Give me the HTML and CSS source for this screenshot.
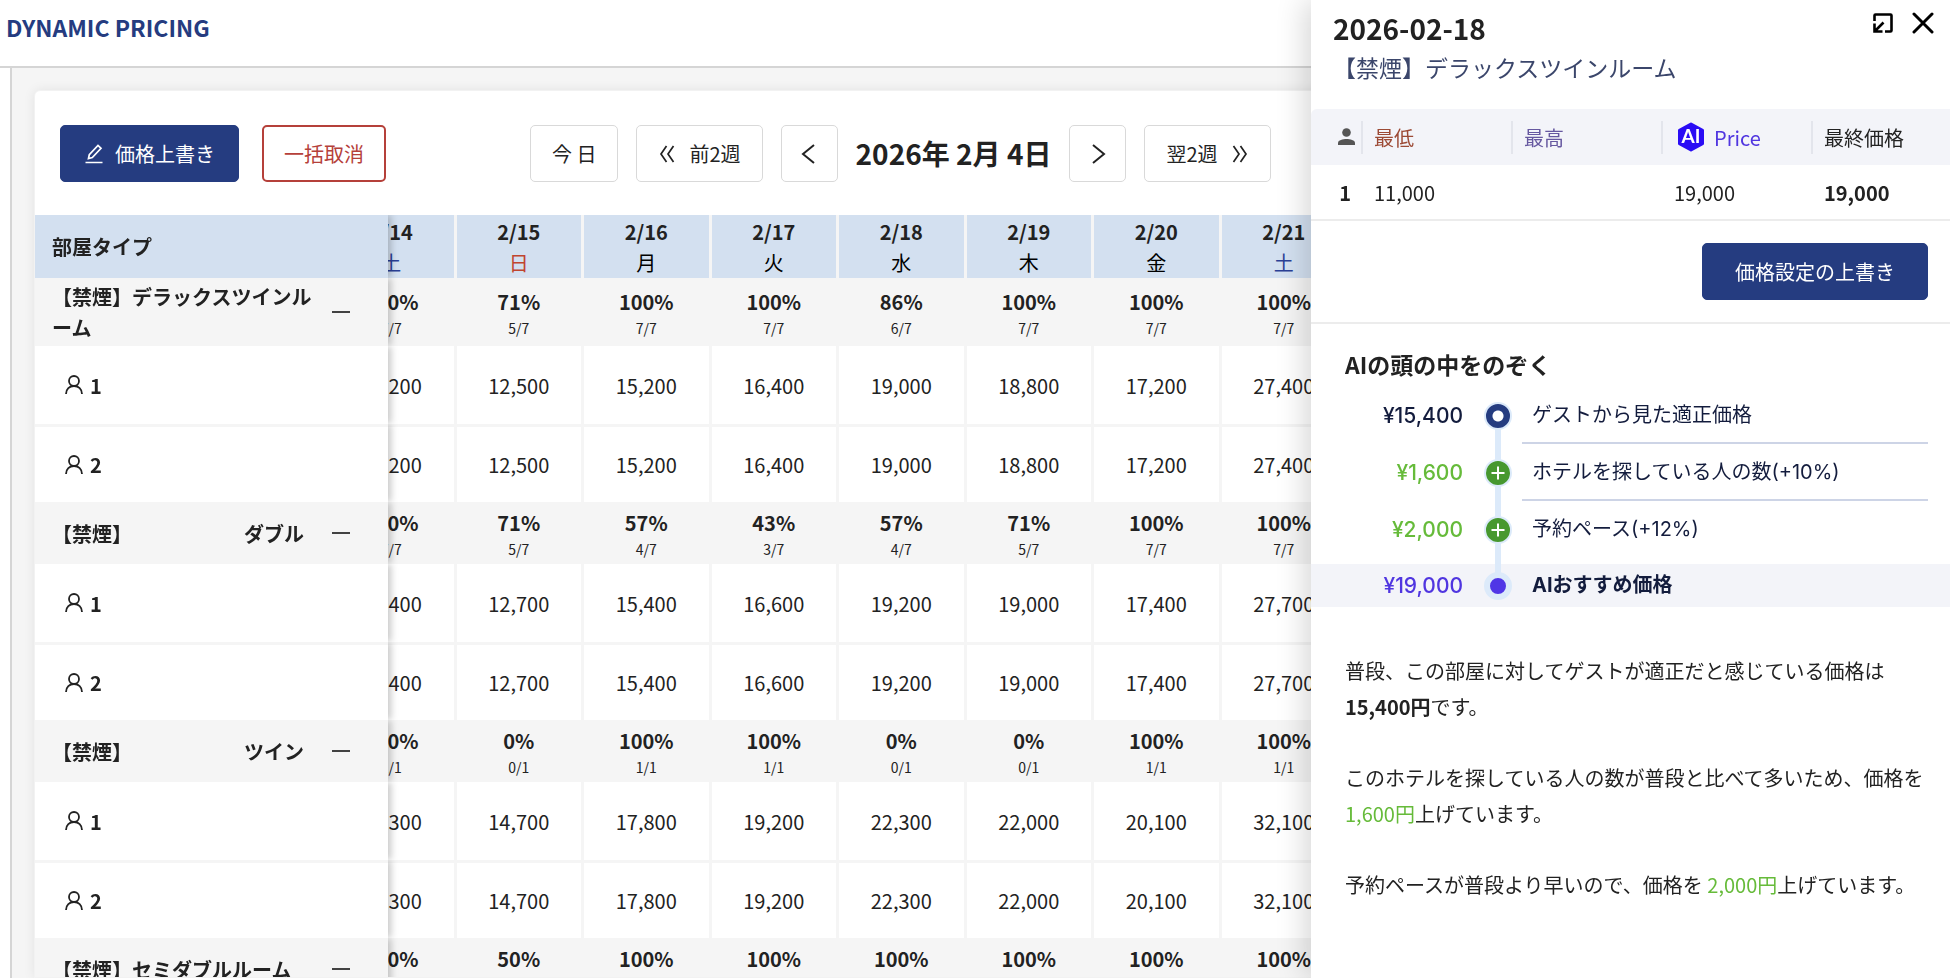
FILE: index.html
```
<!DOCTYPE html>
<html lang="ja">
<head>
    <meta charset="UTF-8">
    <title>DYNAMIC PRICING</title>
    <link rel="stylesheet" href="styles.css">
</head>
<body>
    <!-- Shared icons -->
    <svg class="sprite" aria-hidden="true">
        <symbol id="user" viewBox="0 0 18 20">
            <circle cx="9" cy="6" r="5"/>
            <path d="M1 19c0-5 3.500-8 8-8s8 3 8 8"/>
        </symbol>
        <symbol id="minus" viewBox="0 0 20 20">
            <path d="M1 10h18"/>
        </symbol>
        <symbol id="plus" viewBox="0 0 24 24">
            <path d="M12 5.500v13M5.500 12h13"/>
        </symbol>
    </svg>

    <header class="header">
        <h1>DYNAMIC PRICING</h1>
    </header>

    <main class="main">
        <section class="card">
            <div class="toolbar">
                <div class="actions">
                    <button class="btn btn-primary">
                        <svg class="icon" viewBox="0 0 20 20"><path d="M1.500 18.500h17M4.500 14.500l.8-3.800L14 1.500l3 2.800-8.700 9.200z"/></svg>
                        価格上書き
                    </button>
                    <button class="btn btn-danger">一括取消</button>
                </div>
                <nav class="date-nav">
                    <button class="btn">今 日</button>
                    <button class="btn">
                        <svg class="icon" viewBox="0 0 20 20"><path d="M8.500 2L3 10l5.500 8M15.500 2L10 10l5.500 8"/></svg>
                        前2週
                    </button>
                    <button class="btn btn-square" aria-label="前の日">
                        <svg class="icon icon-bold" viewBox="0 0 20 20"><path d="M15 1L4 10l11 9"/></svg>
                    </button>
                    <h2>2026年 2月 4日</h2>
                    <button class="btn btn-square" aria-label="次の日">
                        <svg class="icon icon-bold" viewBox="0 0 20 20"><path d="M5 1l11 9-11 9"/></svg>
                    </button>
                    <button class="btn">
                        翌2週
                        <svg class="icon" viewBox="0 0 20 20"><path d="M4.500 2l5.500 8-5.500 8M11.500 2l5.500 8-5.500 8"/></svg>
                    </button>
                </nav>
            </div>

            <div class="table-wrap">
                <table class="price-table">
                    <thead>
                        <tr>
                            <th class="room">部屋タイプ</th>
                            <th>2/14<span class="sat">土</span></th>
                            <th>2/15<span class="sun">日</span></th>
                            <th>2/16<span>月</span></th>
                            <th>2/17<span>火</span></th>
                            <th>2/18<span>水</span></th>
                            <th>2/19<span>木</span></th>
                            <th>2/20<span>金</span></th>
                            <th>2/21<span class="sat">土</span></th>
                        </tr>
                    </thead>
                    <tbody>
                        <tr class="group group-first">
                            <th class="room">
                                <div class="room-name"><span class="name">【禁煙】デラックスツインルーム</span><button class="toggle" aria-label="閉じる"><svg class="icon"><use href="#minus"/></svg></button></div>
                            </th>
                            <td>100%<small>7/7</small></td>
                            <td>71%<small>5/7</small></td>
                            <td>100%<small>7/7</small></td>
                            <td>100%<small>7/7</small></td>
                            <td>86%<small>6/7</small></td>
                            <td>100%<small>7/7</small></td>
                            <td>100%<small>7/7</small></td>
                            <td>100%<small>7/7</small></td>
                        </tr>
                        <tr>
                            <th class="room"><div class="guests"><svg class="user"><use href="#user"/></svg>1</div></th>
                            <td>25,200</td><td>12,500</td><td>15,200</td><td>16,400</td><td>19,000</td><td>18,800</td><td>17,200</td><td>27,400</td>
                        </tr>
                        <tr class="next">
                            <th class="room"><div class="guests"><svg class="user"><use href="#user"/></svg>2</div></th>
                            <td>25,200</td><td>12,500</td><td>15,200</td><td>16,400</td><td>19,000</td><td>18,800</td><td>17,200</td><td>27,400</td>
                        </tr>
                        <tr class="group">
                            <th class="room">
                                <div class="room-name"><span class="name name-split"><span>【禁煙】</span><span>ダブル</span></span><button class="toggle" aria-label="閉じる"><svg class="icon"><use href="#minus"/></svg></button></div>
                            </th>
                            <td>100%<small>7/7</small></td>
                            <td>71%<small>5/7</small></td>
                            <td>57%<small>4/7</small></td>
                            <td>43%<small>3/7</small></td>
                            <td>57%<small>4/7</small></td>
                            <td>71%<small>5/7</small></td>
                            <td>100%<small>7/7</small></td>
                            <td>100%<small>7/7</small></td>
                        </tr>
                        <tr>
                            <th class="room"><div class="guests"><svg class="user"><use href="#user"/></svg>1</div></th>
                            <td>25,400</td><td>12,700</td><td>15,400</td><td>16,600</td><td>19,200</td><td>19,000</td><td>17,400</td><td>27,700</td>
                        </tr>
                        <tr class="next">
                            <th class="room"><div class="guests"><svg class="user"><use href="#user"/></svg>2</div></th>
                            <td>25,400</td><td>12,700</td><td>15,400</td><td>16,600</td><td>19,200</td><td>19,000</td><td>17,400</td><td>27,700</td>
                        </tr>
                        <tr class="group">
                            <th class="room">
                                <div class="room-name"><span class="name name-split"><span>【禁煙】</span><span>ツイン</span></span><button class="toggle" aria-label="閉じる"><svg class="icon"><use href="#minus"/></svg></button></div>
                            </th>
                            <td>100%<small>1/1</small></td>
                            <td>0%<small>0/1</small></td>
                            <td>100%<small>1/1</small></td>
                            <td>100%<small>1/1</small></td>
                            <td>0%<small>0/1</small></td>
                            <td>0%<small>0/1</small></td>
                            <td>100%<small>1/1</small></td>
                            <td>100%<small>1/1</small></td>
                        </tr>
                        <tr>
                            <th class="room"><div class="guests"><svg class="user"><use href="#user"/></svg>1</div></th>
                            <td>29,300</td><td>14,700</td><td>17,800</td><td>19,200</td><td>22,300</td><td>22,000</td><td>20,100</td><td>32,100</td>
                        </tr>
                        <tr class="next">
                            <th class="room"><div class="guests"><svg class="user"><use href="#user"/></svg>2</div></th>
                            <td>29,300</td><td>14,700</td><td>17,800</td><td>19,200</td><td>22,300</td><td>22,000</td><td>20,100</td><td>32,100</td>
                        </tr>
                        <tr class="group">
                            <th class="room">
                                <div class="room-name"><span class="name">【禁煙】セミダブルルーム</span><button class="toggle" aria-label="閉じる"><svg class="icon"><use href="#minus"/></svg></button></div>
                            </th>
                            <td>100%<small>2/2</small></td>
                            <td>50%<small>1/2</small></td>
                            <td>100%<small>2/2</small></td>
                            <td>100%<small>2/2</small></td>
                            <td>100%<small>2/2</small></td>
                            <td>100%<small>2/2</small></td>
                            <td>100%<small>2/2</small></td>
                            <td>100%<small>2/2</small></td>
                        </tr>
                    </tbody>
                </table>
            </div>
        </section>
    </main>

    <!-- Detail drawer -->
    <aside class="drawer">
        <div class="drawer-header">
            <div>
                <h2>2026-02-18</h2>
                <p>【禁煙】デラックスツインルーム</p>
            </div>
            <div class="drawer-tools">
                <button aria-label="縮小">
                    <svg viewBox="0 0 22 22" width="22" height="22"><path d="M2.500 9V3.500Q2.500 2.500 3.500 2.500h15Q19.500 2.500 19.500 3.500v15q0 1-1 1H13M2.500 11.500v8h8M3 19l8.500-8.500" stroke-width="2.600"/></svg>
                </button>
                <button aria-label="閉じる">
                    <svg viewBox="0 0 22 22" width="22" height="22"><path d="M2 2l18 18M20 2L2 20" stroke-width="3" stroke-linecap="round"/></svg>
                </button>
            </div>
        </div>

        <table class="summary">
            <thead>
                <tr>
                    <th class="col-person" aria-label="人数"><svg viewBox="0 0 17 18" width="17" height="18"><circle cx="8.500" cy="4.500" r="4.300"/><path d="M0 17v-2c0-3 5-4 8.500-4s8.500 1 8.500 4v2z"/></svg></th>
                    <th class="min">最低</th>
                    <th class="max">最高</th>
                    <th class="ai">
                        <div class="ai-label">
                            <svg viewBox="0 0 28 30" width="28" height="30"><path d="M14 2l11.500 6.300v13.400L14 28 2.500 21.700V8.300z" stroke-width="3" stroke-linejoin="round"/><text x="14" y="21" text-anchor="middle">AI</text></svg>
                            Price
                        </div>
                    </th>
                    <th>最終価格</th>
                </tr>
            </thead>
            <tbody>
                <tr>
                    <td class="col-person"><b>1</b></td>
                    <td>11,000</td>
                    <td></td>
                    <td>19,000</td>
                    <td><b>19,000</b></td>
                </tr>
            </tbody>
        </table>

        <div class="override">
            <button class="btn btn-primary btn-wide">価格設定の上書き</button>
        </div>

        <section class="reasons">
            <h3>AIの頭の中をのぞく</h3>
            <ol class="steps">
                <li>
                    <span class="amount">¥15,400</span>
                    <span class="dot dot-start"></span>
                    <span class="label">ゲストから見た適正価格</span>
                </li>
                <li>
                    <span class="amount up">¥1,600</span>
                    <span class="dot dot-plus"><svg><use href="#plus"/></svg></span>
                    <span class="label">ホテルを探している人の数(+10%)</span>
                </li>
                <li>
                    <span class="amount up">¥2,000</span>
                    <span class="dot dot-plus"><svg><use href="#plus"/></svg></span>
                    <span class="label">予約ペース(+12%)</span>
                </li>
                <li class="result">
                    <span class="amount">¥19,000</span>
                    <span class="dot dot-end"></span>
                    <span class="label">AIおすすめ価格</span>
                </li>
            </ol>
            <div class="notes">
                <p>普段、この部屋に対してゲストが適正だと感じている価格は<b>15,400円</b>です。</p>
                <p>このホテルを探している人の数が普段と比べて多いため、価格を<span class="up">1,600円</span>上げています。</p>
                <p>予約ペースが普段より早いので、価格を <span class="up">2,000円</span>上げています。</p>
            </div>
        </section>
    </aside>
</body>
</html>
```
FILE: styles.css
```
* {
    box-sizing: border-box;
}

body {
    margin: 0;
    height: 100vh;
    overflow: hidden;
    display: flex;
    flex-direction: column;
    background-color: #fff;
    color: #222;
    font-family: "Noto Sans CJK JP", sans-serif;
    font-size: 20px;
    line-height: 31px;
}

h1, h2, h3, p, ol {
    margin: 0;
    padding: 0;
}

button {
    font: inherit;
    color: inherit;
    background: none;
    border: none;
    padding: 0;
    cursor: pointer;
}

svg {
    fill: none;
    stroke: currentColor;
    flex: none;
}

.sprite {
    position: absolute;
    width: 0;
    height: 0;
}

.header {
    flex: none;
    height: 68px;
    padding: 12px 6px;
    border-bottom: 2px solid #d5d5d5;
}

.header h1 {
    color: #253c80;
    font-size: 23px;
    line-height: 31px;
}

.main {
    flex: 1;
    min-height: 0;
    margin-left: 10px;
    padding: 22px 34px 0 22px;
    border-left: 2px solid #d5d5d5;
    background-color: #f5f5f5;
}

.card {
    height: 100%;
    display: flex;
    flex-direction: column;
    background-color: #fff;
    border: 1px solid #f2f2f2;
    border-radius: 6px 6px 0 0;
    box-shadow: 0 0 12px rgba(0, 0, 0, 0.08);
}

/* Toolbar */
.toolbar {
    display: flex;
    align-items: center;
    gap: 144px;
    padding: 34px 25px 33px;
}

.actions {
    display: flex;
    gap: 23px;
}

.date-nav {
    display: flex;
    align-items: center;
    gap: 18px;
}

.date-nav h2 {
    font-size: 28px;
}

.btn {
    display: flex;
    align-items: center;
    justify-content: center;
    gap: 11px;
    height: 57px;
    padding: 0 21px;
    border: 1px solid #d9d9d9;
    border-radius: 5px;
    white-space: nowrap;
}

.btn-primary {
    padding: 0 23px;
    color: #fff;
    background-color: #253c80;
    border-color: #253c80;
}

.btn-danger {
    padding: 0 20px;
    color: #b5403a;
    border: 2px solid #b5403a;
}

.btn-square {
    width: 57px;
    padding: 0;
}

.btn-wide {
    padding: 0 32px;
}

.icon {
    width: 20px;
    height: 20px;
    stroke-width: 1.700;
}

.icon-bold {
    stroke-width: 2;
}

/* Price table */
.table-wrap {
    flex: 1;
    overflow: hidden;
}

.price-table {
    width: 1373px;
    margin-left: -59px; /* scrolled part way into 2/14 */
    table-layout: fixed;
    border-spacing: 0;
    text-align: center;
}

.price-table th,
.price-table td {
    height: 78px;
    padding: 0;
    border-right: 3px solid #f5f5f5;
    background-color: #fff;
}

.price-table .next th,
.price-table .next td {
    border-top: 3px solid #f5f5f5;
}

.price-table thead th {
    height: 63px;
    background-color: #d3e0f0;
}

.price-table thead span {
    display: block;
    font-weight: normal;
    color: #000;
}

.price-table thead .sat {
    color: #2b4096;
}

.price-table thead .sun {
    color: #c0452f;
}

.price-table .room {
    position: sticky;
    left: 0;
    z-index: 1;
    width: 353px;
    padding-right: 37px;
    padding-left: 17px;
    border-right: none;
    text-align: left;
    box-shadow: 3px 0 7px rgba(0, 0, 0, 0.22);
    clip-path: inset(0 -12px 0 0); /* shadow on the right side only */
}

.price-table .group th,
.price-table .group td {
    height: 62px;
    background-color: #f5f5f5;
    font-weight: bold;
}

.price-table .group-first th,
.price-table .group-first td {
    height: 68px;
}

.group small {
    display: block;
    font-size: 14px;
    line-height: 22px;
    font-weight: normal;
}

.room-name {
    display: flex;
    align-items: center;
    justify-content: space-between;
}

.name {
    width: 266px;
}

.name-split {
    display: flex;
    gap: 112px;
}

.toggle {
    display: flex;
}

.guests {
    display: flex;
    align-items: center;
    gap: 7px;
    padding-left: 13px;
}

.user {
    width: 18px;
    height: 20px;
    stroke-width: 1.800;
}

/* Drawer */
.drawer {
    position: fixed;
    top: 0;
    right: 0;
    bottom: 0;
    z-index: 10;
    width: 639px;
    background-color: #fff;
    box-shadow: -6px 0 28px rgba(0, 0, 0, 0.16);
}

.drawer-header {
    display: flex;
    justify-content: space-between;
    padding: 9px 16px 22px 22px;
}

.drawer-header h2 {
    font-size: 28px;
    line-height: 38px;
}

.drawer-header p {
    color: #3b466b;
    font-size: 23px;
    line-height: 40px;
}

.drawer-tools {
    display: flex;
    align-items: flex-start;
    gap: 18px;
    padding-top: 3px;
    color: #000;
}

.drawer-tools button {
    display: flex;
}

.summary {
    width: 100%;
    table-layout: fixed;
    border-spacing: 0;
    text-align: left;
}

.summary th,
.summary td {
    width: 150px;
    height: 56px;
    padding: 0 0 0 11px;
    font-weight: normal;
}

.summary th:last-child,
.summary td:last-child {
    width: auto;
}

.summary th {
    background: linear-gradient(#e3e5ec, #e3e5ec) right center / 2px 33px no-repeat #f3f4f9;
}

.summary th:first-child {
    border-top-left-radius: 6px;
}

.summary th:last-child {
    background-image: none;
}

.summary td {
    border-bottom: 2px solid #ececec;
}

.summary .col-person {
    width: 52px;
    padding: 0 8px 0 0;
    text-align: right;
}

.summary .col-person b {
    padding-right: 4px;
}

.col-person svg {
    display: block;
    margin-left: auto;
    fill: #555;
    stroke: none;
}

.summary .min {
    color: #9c4a35;
}

.summary .max {
    color: #6658a0;
}

.summary .ai {
    padding-left: 14px;
}

.ai-label {
    display: flex;
    align-items: center;
    gap: 9px;
    color: #5036e0;
}

.ai-label svg {
    fill: #2a0cf5;
    stroke: #2a0cf5;
}

.ai-label text {
    fill: #fff;
    stroke: none;
    font-family: Lato, sans-serif;
    font-size: 19px;
    font-weight: bold;
}

.override {
    display: flex;
    justify-content: flex-end;
    padding: 22px;
    border-bottom: 2px solid #ececec;
}

.reasons h3 {
    padding: 25px 34px 7px;
    font-size: 23px;
    line-height: 31px;
}

.steps {
    list-style: none;
    color: #131c3d;
    font-family: Inter, "Noto Sans CJK JP", sans-serif;
}

.steps li {
    display: grid;
    grid-template-columns: 152px 28px 1fr;
    column-gap: 21px;
    align-items: center;
    height: 57px;
    padding-right: 22px;
}

.steps .amount {
    text-align: right;
    font-size: 21px;
    font-weight: 500;
}

.steps .label {
    align-self: stretch;
    display: flex;
    align-items: center;
    margin-left: -11px;
    padding-left: 10px;
}

.steps li:nth-child(-n+2) .label {
    padding-top: 2px;
    border-bottom: 2px solid #cdd4e6;
}

.steps .result {
    height: 43px;
    margin-top: 6px;
    background-color: #f3f4f9;
}

.result .amount {
    color: #5036e0;
}

.result .label {
    font-weight: bold;
}

.dot {
    position: relative;
    display: flex;
    width: 28px;
    height: 28px;
    border: 2px solid #dceafa;
    border-radius: 50%;
}

/* line down to the next dot */
.dot::after {
    content: "";
    position: absolute;
    top: 25px;
    left: 9px;
    width: 6px;
    height: 31px;
    background-color: #dceafa;
}

.dot-start {
    background: radial-gradient(circle, #fff 5px, #253c80 6px);
}

.dot-plus {
    background-color: #47982f;
    color: #fff;
}

.dot-plus svg {
    width: 24px;
    height: 24px;
    stroke-width: 2;
}

.dot-end {
    background-color: #5036e6;
    border-width: 6px;
}

.dot-end::after {
    display: none;
}

.up {
    color: #66bb3a;
}

.notes {
    padding: 46px 22px 0 34px;
    line-height: 36px;
}

.notes p {
    margin-bottom: 35px;
}
```
